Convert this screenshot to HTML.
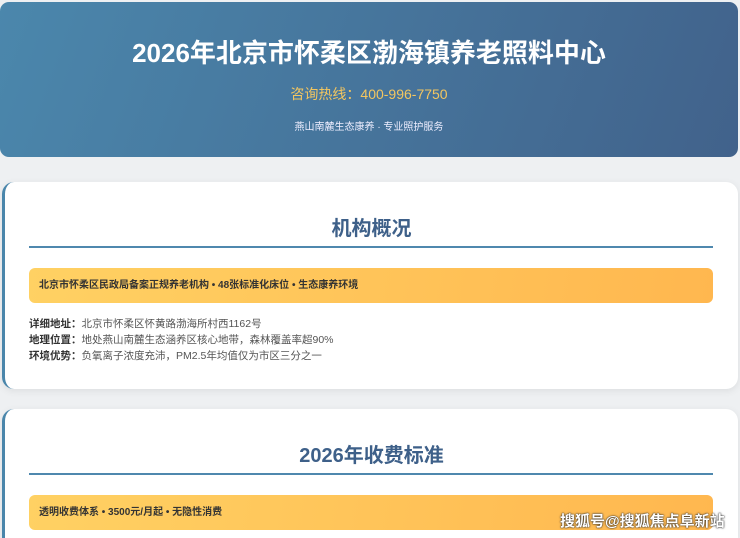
<!DOCTYPE html>
<html><head><meta charset="utf-8"><style>
*{margin:0;padding:0;box-sizing:border-box}
html,body{width:740px;height:538px;overflow:hidden}
body{background:#eef0f2;font-family:"Liberation Sans","Noto Sans CJK SC",sans-serif;position:relative}
.hd{position:absolute;left:0;top:2px;width:738px;height:155px;border-radius:9px;background:linear-gradient(110deg,#4b87ac,#41628b);text-align:center;color:#fff}
.hd h1{position:absolute;top:31px;width:100%;font-size:26px;font-weight:bold}
.hd .tel{position:absolute;top:82px;width:100%;font-size:14px;color:#f3c660}
.hd .sub{position:absolute;top:116px;width:100%;font-size:10px;color:#eef}
.card{position:absolute;left:2px;width:736px;background:#fff;border-radius:12px;border-left:3px solid #4a86ab;box-shadow:0 2px 8px rgba(0,0,0,.08)}
.card h2{position:absolute;width:100%;text-align:center;font-size:20px;font-weight:bold;color:#3e6089}
.line{position:absolute;left:24px;width:684px;height:2px;background:#4f88ae}
.yb{position:absolute;left:24px;width:684px;height:35px;border-radius:6px;background:linear-gradient(100deg,#ffd163,#ffb74f);font-size:10px;font-weight:bold;color:#333;padding-left:10px;line-height:35px}
.det{position:absolute;left:24px;top:134px;font-size:10.5px;line-height:16px;color:#555}
.det b{color:#333}
.wm{position:absolute;left:560px;top:510px;font-size:15px;font-weight:bold;color:#fff;text-shadow:0 0 2px #333,0 0 1px #000}
</style></head><body>
<div class="hd"><h1>2026年北京市怀柔区渤海镇养老照料中心</h1><div class="tel">咨询热线：400-996-7750</div><div class="sub">燕山南麓生态康养 · 专业照护服务</div></div>
<div class="card" style="top:182px;height:207px">
<h2 style="top:30px">机构概况</h2><div class="line" style="top:64px"></div>
<div class="yb" style="top:86px">北京市怀柔区民政局备案正规养老机构 • 48张标准化床位 • 生态康养环境</div>
<div class="det"><b>详细地址：</b>北京市怀柔区怀黄路渤海所村西1162号<br><b>地理位置：</b>地处燕山南麓生态涵养区核心地带，森林覆盖率超90%<br><b>环境优势：</b>负氧离子浓度充沛，PM2.5年均值仅为市区三分之一</div>
</div>
<div class="card" style="top:409px;height:129px;border-bottom-left-radius:0;border-bottom-right-radius:0">
<h2 style="top:30px">2026年收费标准</h2><div class="line" style="top:64px"></div>
<div class="yb" style="top:86px">透明收费体系 • 3500元/月起 • 无隐性消费</div>
</div>
<div class="wm">搜狐号@搜狐焦点阜新站</div>
</body></html>
